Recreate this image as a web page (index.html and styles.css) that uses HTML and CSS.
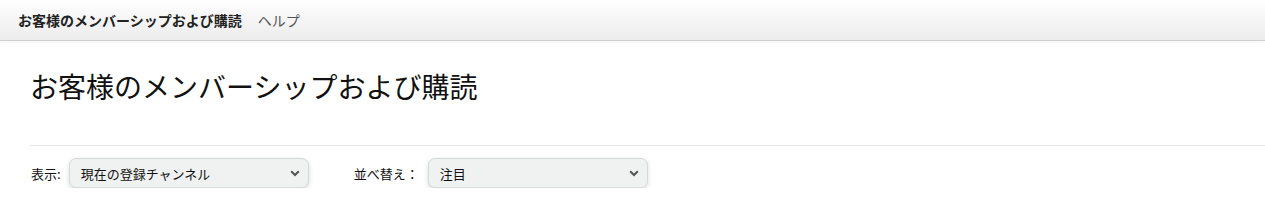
FILE: index.html
```html
<!DOCTYPE html>
<html lang="ja">
<head>
  <meta charset="UTF-8">
  <meta name="viewport" content="width=device-width, initial-scale=1.0">
  <title>お客様のメンバーシップおよび購読</title>
  <link rel="stylesheet" href="styles.css">
</head>
<body>
  <div class="topbar">
    <span class="topbar-title">お客様のメンバーシップおよび購読</span>
    <a class="topbar-link" href="#">ヘルプ</a>
  </div>

  <div class="content">
    <h1 class="page-title">お客様のメンバーシップおよび購読</h1>
    <hr class="divider">

    <div class="filters">
      <label class="filter">
        <span class="filter-label">表示:</span>
        <span class="dropdown dropdown-wide">
          <select>
            <option>現在の登録チャンネル</option>
            <option>過去の登録チャンネル</option>
          </select>
          <svg class="chevron" width="10" height="7" viewBox="0 0 10 7"><path d="M1.2 1.3 L5 5 L8.8 1.3" fill="none" stroke="#555" stroke-width="2"/></svg>
        </span>
      </label>

      <label class="filter filter-sort">
        <span class="filter-label">並べ替え：</span>
        <span class="dropdown dropdown-narrow">
          <select>
            <option>注目</option>
            <option>新しい順</option>
          </select>
          <svg class="chevron" width="10" height="7" viewBox="0 0 10 7"><path d="M1.2 1.3 L5 5 L8.8 1.3" fill="none" stroke="#555" stroke-width="2"/></svg>
        </span>
      </label>
    </div>
  </div>
</body>
</html>
```

FILE: styles.css
```css
body {
  margin: 0;
  font-family: "Noto Sans CJK JP", "Noto Sans", Arial, sans-serif;
  color: #111;
  background-color: #fff;
}
.topbar {
  height: 40px;
  display: flex;
  align-items: center;
  padding-left: 18px;
  background: linear-gradient(#fefefe, #ececec);
  border-bottom: 1px solid #cfcfcf;
  box-shadow: 0 2px 3px rgba(0, 0, 0, 0.03);
}
.topbar-title {
  font-size: 14px;
  font-weight: bold;
  color: #222;
}
.topbar-link {
  margin-left: 16px;
  font-size: 14px;
  color: #555;
  text-decoration: none;
}
.content {
  padding-left: 30px;
}
.page-title {
  margin: 25px 0 0 0;
  font-size: 28px;
  font-weight: normal;
  line-height: 40px;
  color: #111;
}
.divider {
  margin: 39px 0 0 0;
  border: none;
  border-top: 1px solid #e5e5e5;
}
.filters {
  display: flex;
  gap: 45px;
  margin-top: 12px;
  padding-left: 1px;
}
.filter {
  display: flex;
  align-items: center;
  gap: 8px;
  font-size: 13px;
  color: #111;
}
.filter-sort {
  gap: 9px;
}
.dropdown {
  position: relative;
  display: inline-block;
}
.dropdown select {
  appearance: none;
  -webkit-appearance: none;
  height: 30px;
  padding: 0 30px 0 11px;
  font-family: inherit;
  font-size: 13px;
  color: #111;
  background-color: #f0f2f2;
  border: 1px solid #d5d9d9;
  border-radius: 7px;
  box-shadow: 0 2px 5px rgba(15, 17, 17, 0.15);
  width: 100%;
}
.dropdown-wide {
  width: 240px;
}
.dropdown-narrow {
  width: 220px;
}
.chevron {
  position: absolute;
  right: 9px;
  top: 12px;
  pointer-events: none;
}
```
